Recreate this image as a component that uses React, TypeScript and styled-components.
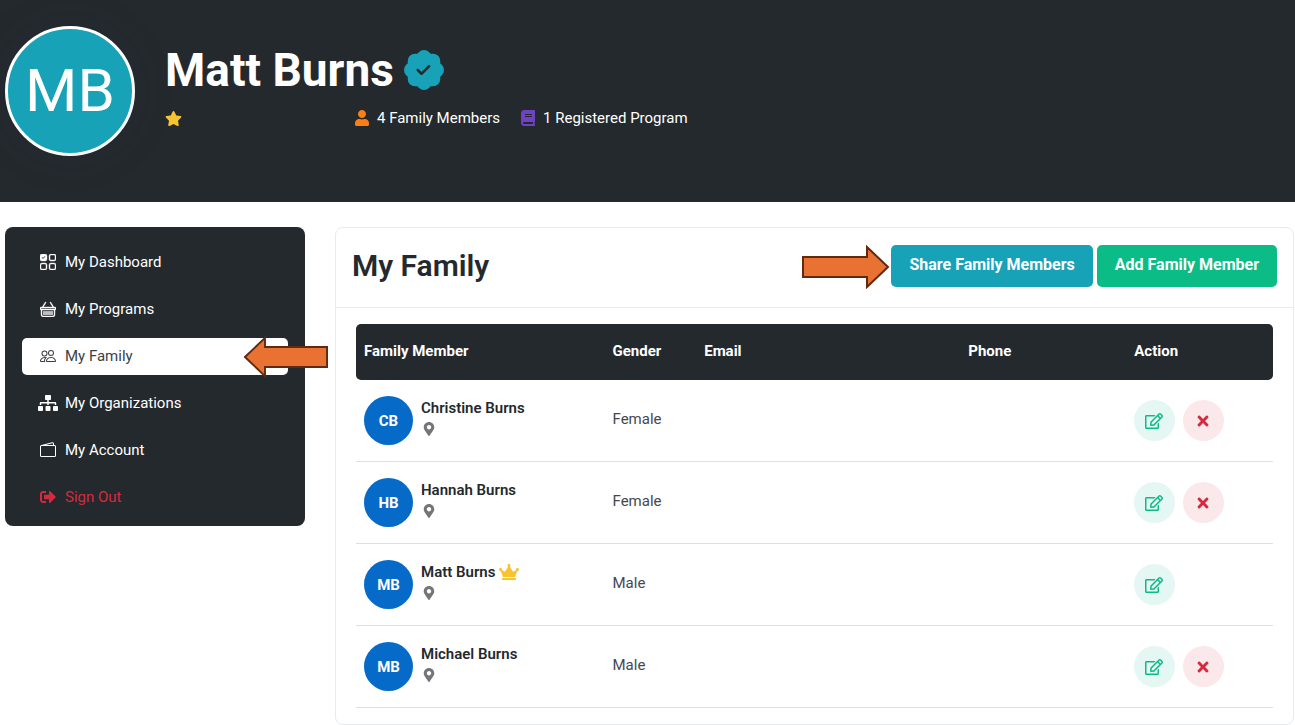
import React from "react";
import styled, { createGlobalStyle } from "styled-components";
import { BsUiChecksGrid, BsBasket, BsPeople, BsWallet2, BsPatchCheckFill } from "react-icons/bs";
import { FaSitemap, FaSignOutAlt, FaStar, FaUser, FaBook, FaMapMarkerAlt, FaCrown, FaTimes, FaRegEdit } from "react-icons/fa";

const dark = "#24292d";
const teal = "#17a2b8";
const green = "#0cbc87";
const red = "#d6293e";

const GlobalStyle = createGlobalStyle`
  *, *::before, *::after { box-sizing: border-box; }
  body {
    margin: 0;
    background: #fff;
    color: ${dark};
    font-family: Roboto, "Liberation Sans", sans-serif;
    font-size: 15px;
    line-height: 22px;
  }
  svg { flex: none; display: block; }
`;

const Banner = styled.header`
  display: flex;
  align-items: flex-start;
  gap: 30px;
  min-height: 202px;
  padding: 26px 5px;
  background: ${dark};
  color: #fff;
`;

const ProfileAvatar = styled.div`
  display: grid;
  place-items: center;
  flex: none;
  width: 130px;
  height: 130px;
  border: 3px solid #fff;
  border-radius: 50%;
  background: ${teal};
  box-shadow: 0 0 40px rgba(29, 58, 83, 0.15);
  font-size: 60px;
  line-height: 60px;
`;

const Profile = styled.div`
  display: flex;
  flex-direction: column;
  gap: 9px;
  padding-top: 16px;
`;

const ProfileName = styled.h1`
  display: flex;
  align-items: center;
  gap: 10px;
  margin: 0;
  font-size: 46px;
  font-weight: 700;
  line-height: 56px;
`;

const Facts = styled.ul`
  display: flex;
  gap: 20px;
  margin: 0;
  padding: 0;
  list-style: none;
`;

const Fact = styled.li<{ $color: string; $width?: number }>`
  display: flex;
  align-items: center;
  gap: 7px;
  min-width: ${(p) => (p.$width ? `${p.$width}px` : "auto")};
  svg { color: ${(p) => p.$color}; }
`;

const Layout = styled.div`
  display: grid;
  grid-template-columns: 300px minmax(0, 1fr);
  align-items: start;
  gap: 30px;
  padding: 25px 1px 0 5px;
`;

const Sidebar = styled.nav`
  display: flex;
  flex-direction: column;
  gap: 10px;
  padding: 17px 17px 10px;
  border-radius: 8px;
  background: ${dark};
`;

const NavLink = styled.a<{ $active?: boolean; $danger?: boolean }>`
  position: relative;
  display: grid;
  grid-template-columns: 20px 1fr;
  align-items: center;
  justify-items: start;
  gap: 7px;
  height: 37px;
  padding: 0 16px 2px;
  border-radius: 5px;
  background: ${(p) => (p.$active ? "#fff" : "transparent")};
  color: ${(p) => (p.$danger ? red : p.$active ? "#3a3f43" : "#fff")};
  text-decoration: none;
  > svg:first-child { justify-self: center; }
`;

const SidebarPointer = styled.span`
  position: absolute;
  top: -2px;
  right: -40px;
`;

const Panel = styled.main`
  border: 1px solid #e9eaec;
  border-radius: 8px;
  padding-bottom: 16px;
`;

const PanelHeader = styled.div`
  display: flex;
  align-items: flex-start;
  justify-content: space-between;
  height: 80px;
  padding: 17px 16px 0;
  border-bottom: 1px solid #e9eaec;
`;

const PanelTitle = styled.h2`
  margin: 0;
  font-size: 30px;
  font-weight: 600;
  line-height: 42px;
`;

const Actions = styled.div`
  position: relative;
  display: flex;
  gap: 4px;
`;

const ActionsPointer = styled.span`
  position: absolute;
  top: 0;
  right: 100%;
  padding-right: 1px;
`;

const Button = styled.button<{ $color: string }>`
  height: 42px;
  padding: 0 18px 2px;
  border: 0;
  border-radius: 5px;
  background: ${(p) => p.$color};
  color: #fff;
  font: 700 16px/22px Roboto, "Liberation Sans", sans-serif;
  cursor: pointer;
`;

const TableWrap = styled.div`
  padding: 16px 20px 0;
`;

const Table = styled.table`
  width: 100%;
  table-layout: fixed;
  border-collapse: separate;
  border-spacing: 0;
`;

const HeadCell = styled.th<{ $width: string }>`
  width: ${(p) => p.$width};
  height: 56px;
  padding: 0 8px 2px;
  background: ${dark};
  color: #fff;
  font-weight: 700;
  text-align: left;
  &:first-child { border-radius: 5px 0 0 5px; }
  &:last-child { border-radius: 0 5px 5px 0; }
`;

const Cell = styled.td<{ $text?: boolean }>`
  height: 82px;
  padding: ${(p) => (p.$text ? "0 8px 3px" : "0 8px")};
  border-bottom: 1px solid #dcdfe3;
  color: #45494d;
`;

const Member = styled.div`
  display: flex;
  align-items: center;
  gap: 8px;
`;

const Initials = styled.div`
  display: grid;
  place-items: center;
  flex: none;
  width: 49px;
  height: 49px;
  border-radius: 50%;
  background: #066ac9;
  color: #fff;
  font-weight: 700;
`;

const MemberText = styled.div`
  padding-bottom: 3px;
`;

const MemberName = styled.div`
  display: flex;
  align-items: center;
  gap: 4px;
  color: ${dark};
  font-weight: 600;
  svg { color: #f7c32e; }
`;

const MemberPlace = styled.div`
  height: 22px;
  padding: 3px 1px;
  color: #747579;
`;

const RowActions = styled.div`
  display: flex;
  gap: 8px;
`;

const RoundButton = styled.button<{ $tone: "edit" | "remove" }>`
  display: grid;
  place-items: center;
  width: 41px;
  height: 41px;
  padding: 0 1px 0 0;
  border: 0;
  border-radius: 50%;
  background: ${(p) => (p.$tone === "edit" ? "#e4f7f2" : "#fbe8eb")};
  color: ${(p) => (p.$tone === "edit" ? green : red)};
  cursor: pointer;
`;

const Arrow = ({ left }: { left?: boolean }) => (
  <svg width={left ? 84 : 88} height={left ? 42 : 44} viewBox="0 0 88 44" preserveAspectRatio="none" aria-hidden="true">
    <path
      d={left ? "M1 22 L22 2 V11.500 H87 V32.500 H22 V42 Z" : "M1 12 H65 V2 L86 22 L65 42 V32 H1 Z"}
      fill="#e97132"
      stroke="#5e2a10"
      strokeWidth="2"
    />
  </svg>
);

const members = [
  { name: "Christine Burns", initials: "CB", gender: "Female" },
  { name: "Hannah Burns", initials: "HB", gender: "Female" },
  { name: "Matt Burns", initials: "MB", gender: "Male", owner: true },
  { name: "Michael Burns", initials: "MB", gender: "Male" },
];

const columns = [
  { label: "Family Member", width: "27.1%" },
  { label: "Gender", width: "10%" },
  { label: "Email", width: "28.8%" },
  { label: "Phone", width: "18.1%" },
  { label: "Action", width: "16%" },
];

export default function App() {
  return (
    <>
      <GlobalStyle />
      <Banner>
        <ProfileAvatar>MB</ProfileAvatar>
        <Profile>
          <ProfileName>
            Matt Burns <BsPatchCheckFill size={40} color={teal} />
          </ProfileName>
          <Facts>
            <Fact $color="#f7c32e" $width={169}><FaStar size={17} /></Fact>
            <Fact $color="#fd7e14"><FaUser size={16} />4 Family Members</Fact>
            <Fact $color="#6f42c1"><FaBook size={16} />1 Registered Program</Fact>
          </Facts>
        </Profile>
      </Banner>
      <Layout>
        <Sidebar aria-label="Account">
          <NavLink href="#dashboard"><BsUiChecksGrid size={16} strokeWidth={0.4} />My Dashboard</NavLink>
          <NavLink href="#programs"><BsBasket size={16} strokeWidth={0.4} />My Programs</NavLink>
          <NavLink href="#family" $active aria-current="page">
            <BsPeople size={16} />My Family
            <SidebarPointer><Arrow left /></SidebarPointer>
          </NavLink>
          <NavLink href="#organizations"><FaSitemap size={20} />My Organizations</NavLink>
          <NavLink href="#account"><BsWallet2 size={16} />My Account</NavLink>
          <NavLink href="#signout" $danger><FaSignOutAlt size={16} />Sign Out</NavLink>
        </Sidebar>
        <Panel>
          <PanelHeader>
            <PanelTitle>My Family</PanelTitle>
            <Actions>
              <ActionsPointer><Arrow /></ActionsPointer>
              <Button type="button" $color={teal}>Share Family Members</Button>
              <Button type="button" $color={green}>Add Family Member</Button>
            </Actions>
          </PanelHeader>
          <TableWrap>
            <Table>
              <thead>
                <tr>
                  {columns.map((c) => (
                    <HeadCell key={c.label} scope="col" $width={c.width}>{c.label}</HeadCell>
                  ))}
                </tr>
              </thead>
              <tbody>
                {members.map((m) => (
                  <tr key={m.name}>
                    <Cell>
                      <Member>
                        <Initials>{m.initials}</Initials>
                        <MemberText>
                          <MemberName>{m.name}{m.owner && <FaCrown size={20} />}</MemberName>
                          <MemberPlace><FaMapMarkerAlt size={14} /></MemberPlace>
                        </MemberText>
                      </Member>
                    </Cell>
                    <Cell $text>{m.gender}</Cell>
                    <Cell />
                    <Cell />
                    <Cell>
                      <RowActions>
                        <RoundButton type="button" $tone="edit" aria-label={`Edit ${m.name}`}><FaRegEdit size={18} /></RoundButton>
                        {!m.owner && (
                          <RoundButton type="button" $tone="remove" aria-label={`Remove ${m.name}`}><FaTimes size={16} /></RoundButton>
                        )}
                      </RowActions>
                    </Cell>
                  </tr>
                ))}
              </tbody>
            </Table>
          </TableWrap>
        </Panel>
      </Layout>
    </>
  );
}
